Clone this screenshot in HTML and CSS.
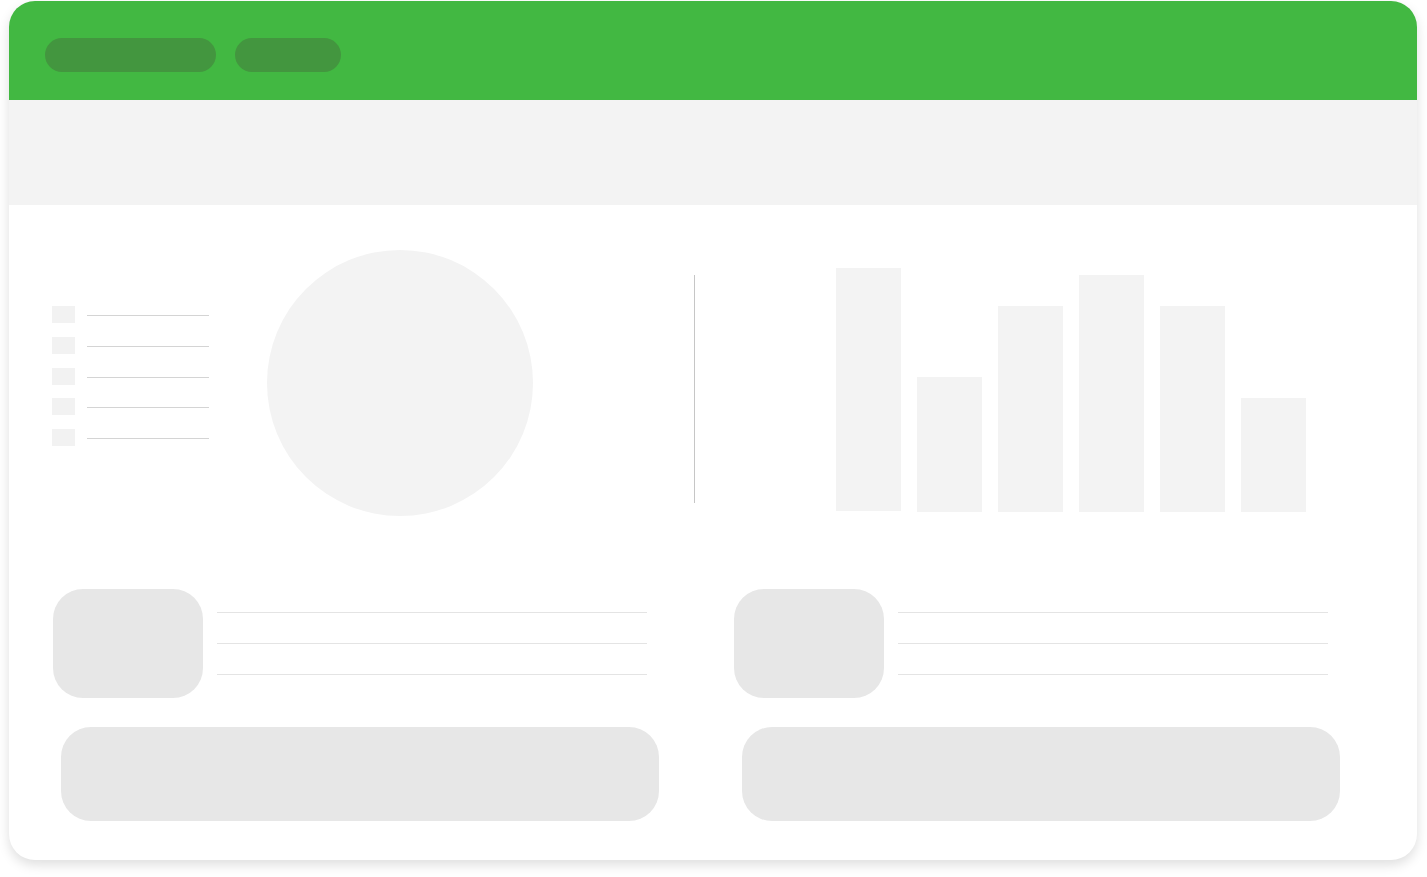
FILE: index.html
```html
<!DOCTYPE html>
<html lang="en">
<head>
<meta charset="utf-8">
<title>Dashboard skeleton</title>
<link rel="stylesheet" href="styles.css">
</head>
<body>
<div class="card">
  <header class="topbar">
    <span class="pill pill-wide"></span>
    <span class="pill pill-short"></span>
  </header>
  <div class="band"></div>
  <section class="charts">
    <ul class="legend">
      <li class="legend-item"><span class="swatch"></span><span class="legend-line"></span></li>
      <li class="legend-item"><span class="swatch"></span><span class="legend-line"></span></li>
      <li class="legend-item"><span class="swatch"></span><span class="legend-line"></span></li>
      <li class="legend-item"><span class="swatch"></span><span class="legend-line"></span></li>
      <li class="legend-item"><span class="swatch"></span><span class="legend-line"></span></li>
    </ul>
    <div class="pie"></div>
    <div class="divider"></div>
    <div class="bars">
      <span class="bar bar-first" style="height:243px"></span>
      <span class="bar" style="height:135px"></span>
      <span class="bar" style="height:206px"></span>
      <span class="bar" style="height:237px"></span>
      <span class="bar" style="height:206px"></span>
      <span class="bar" style="height:114px"></span>
    </div>
  </section>
  <section class="lower">
    <div class="col">
      <div class="media">
        <div class="thumb"></div>
        <div class="lines">
          <span class="line"></span>
          <span class="line"></span>
          <span class="line"></span>
        </div>
      </div>
      <div class="block"></div>
    </div>
    <div class="col">
      <div class="media">
        <div class="thumb"></div>
        <div class="lines">
          <span class="line"></span>
          <span class="line"></span>
          <span class="line"></span>
        </div>
      </div>
      <div class="block"></div>
    </div>
  </section>
</div>
</body>
</html>
```

FILE: styles.css
```css
* { box-sizing: border-box; }

html, body {
  margin: 0;
  padding: 0;
  background: #ffffff;
  font-family: "Liberation Sans", Arial, sans-serif;
}

body {
  padding: 1px 10px 17px 9px;
}

.card {
  width: 1408px;
  height: 859px;
  background: #ffffff;
  border-radius: 26px;
  overflow: hidden;
  box-shadow: 0 5px 12px rgba(0, 0, 0, 0.13);
  display: flex;
  flex-direction: column;
}

.topbar {
  height: 99px;
  flex: none;
  background: #42b842;
  display: flex;
  align-items: flex-start;
  gap: 19px;
  padding: 37px 0 0 36px;
}

.pill {
  display: block;
  height: 34px;
  border-radius: 17px;
  background: #43963f;
}

.pill-wide { width: 171px; }
.pill-short { width: 106px; }

.band {
  height: 105px;
  flex: none;
  background: #f3f3f3;
}

.charts {
  height: 311px;
  flex: none;
  display: flex;
  align-items: flex-start;
}

.legend {
  list-style: none;
  margin: 101px 0 0 43px;
  padding: 0;
  width: 157px;
  display: flex;
  flex-direction: column;
  gap: 13.75px;
}

.legend-item {
  display: flex;
  align-items: flex-start;
  gap: 12px;
  height: 17px;
}

.swatch {
  width: 23px;
  height: 17px;
  background: #f2f2f2;
  flex: none;
}

.legend-line {
  flex: 1;
  height: 1px;
  margin-top: 9px;
  background: #d4d4d4;
}

.pie {
  width: 266px;
  height: 266px;
  border-radius: 50%;
  background: #f3f3f3;
  margin: 45px 0 0 58px;
  flex: none;
}

.divider {
  width: 1px;
  height: 228px;
  background: #c6c6c6;
  margin: 70px 0 0 161px;
  flex: none;
}

.bars {
  margin: 63px 0 0 141px;
  height: 244px;
  display: flex;
  align-items: flex-end;
  gap: 16px;
}

.bar {
  display: block;
  width: 65px;
  background: #f3f3f3;
}

.bar-first {
  margin-bottom: 1px;
}

.lower {
  margin-top: 73px;
  padding-left: 44px;
  display: grid;
  grid-template-columns: 681px 681px;
}

.media {
  display: flex;
  align-items: flex-start;
  gap: 14px;
}

.thumb {
  width: 150px;
  height: 109px;
  border-radius: 30px;
  background: #e7e7e7;
  flex: none;
}

.lines {
  width: 430px;
  padding-top: 23px;
  display: flex;
  flex-direction: column;
  gap: 30px;
}

.line {
  display: block;
  height: 1px;
  background: #e4e4e4;
}

.block {
  width: 598px;
  height: 94px;
  margin: 29px 0 0 8px;
  border-radius: 30px;
  background: #e7e7e7;
}
```
